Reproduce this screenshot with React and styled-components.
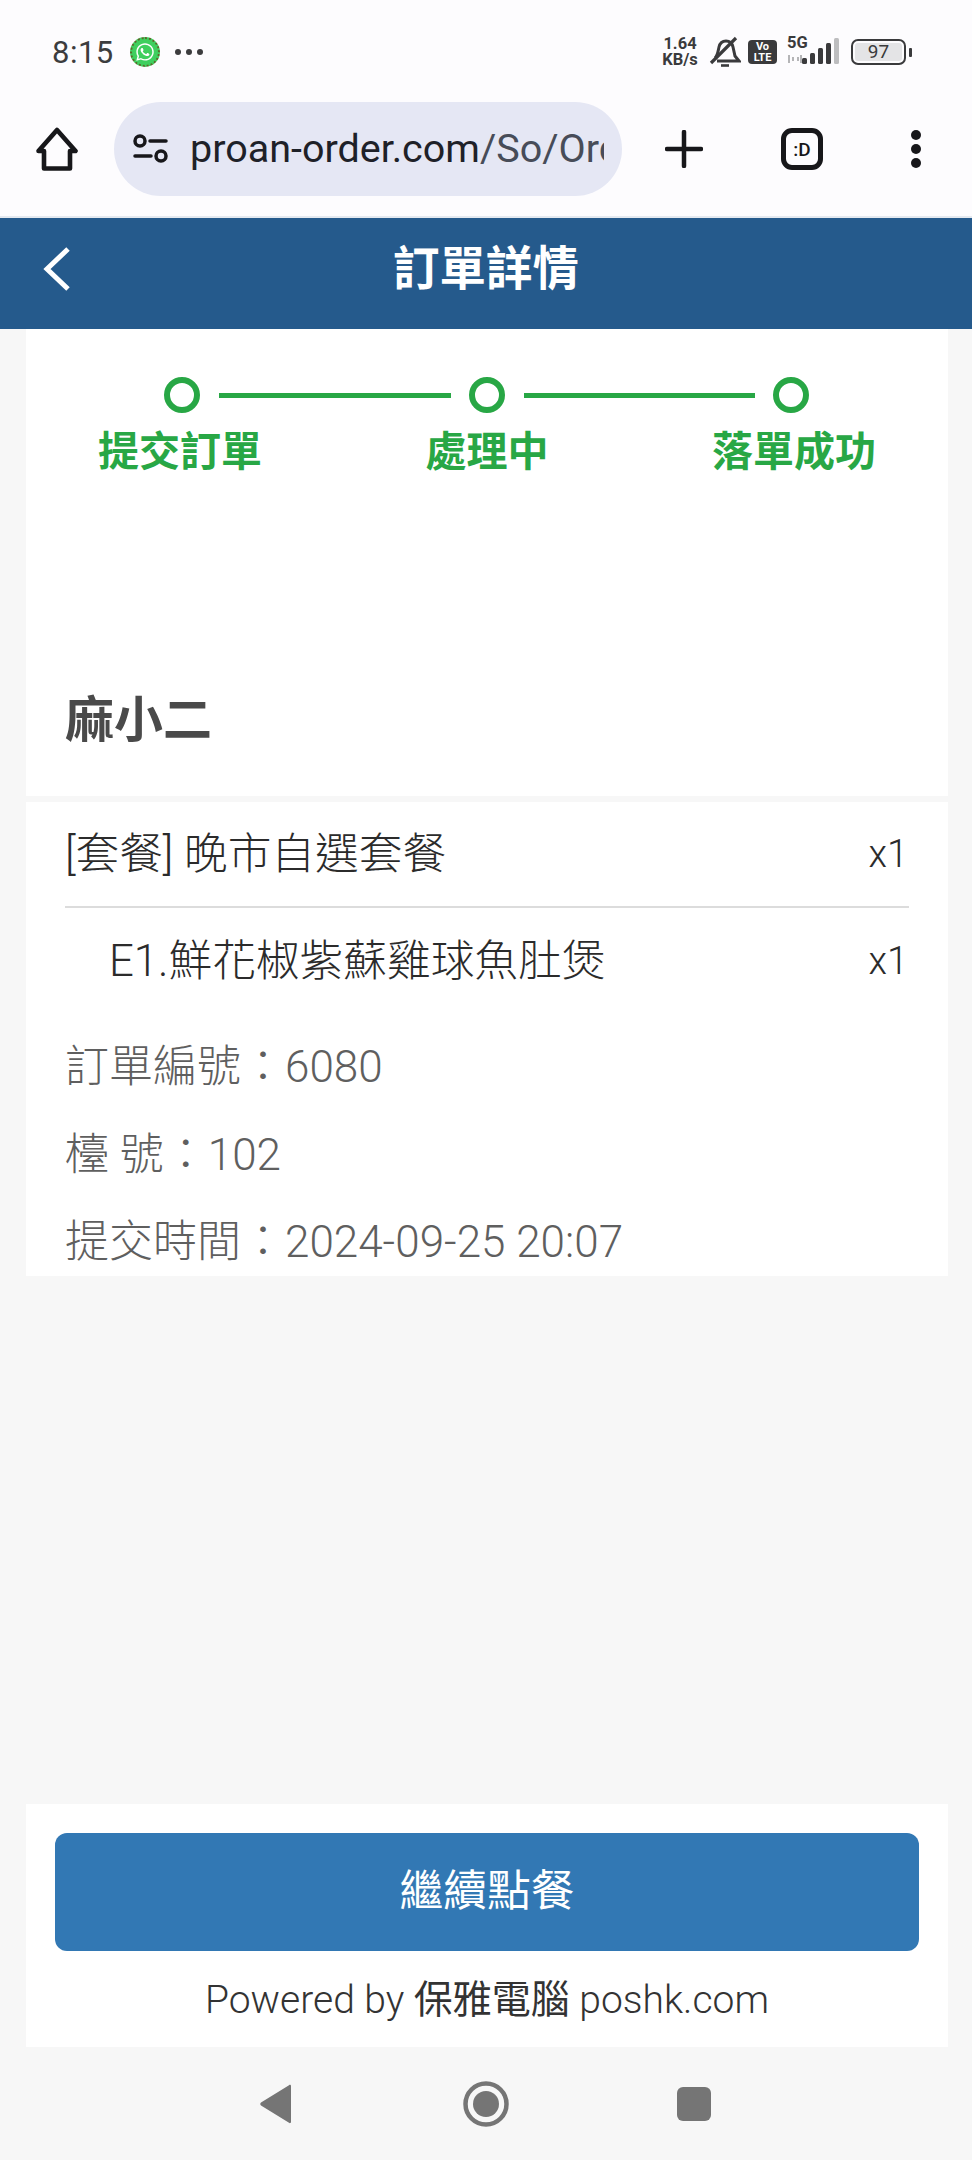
import React from 'react'
import styled, { createGlobalStyle } from 'styled-components'
import { FaWhatsapp } from 'react-icons/fa'

const GlobalStyle = createGlobalStyle`
  html, body {
    margin: 0;
    padding: 0;
    background: #f7f7f7;
  }
  * {
    box-sizing: border-box;
  }
`

const Screen = styled.div`
  width: 972px;
  height: 2160px;
  display: flex;
  flex-direction: column;
  overflow: hidden;
  background: #f7f7f7;
  font-family: Roboto, 'Noto Sans CJK TC', sans-serif;
`

const BrowserChrome = styled.div`
  height: 218px;
  flex: none;
  background: #fdfcfe;
  border-bottom: 2px solid #e4e9f0;
`

const StatusBar = styled.div`
  height: 102px;
  padding: 2px 0 0 52px;
  display: flex;
  align-items: center;
  color: #3c3c3e;
`

const Time = styled.span`
  font-size: 31px;
  width: 78px;
  letter-spacing: 0.5px;
`

const WhatsAppBadge = styled.span`
  width: 30px;
  height: 30px;
  border-radius: 50%;
  background: #3fcf5e;
  border: 2px dotted #5a6a2a;
  color: #fff;
  display: flex;
  align-items: center;
  justify-content: center;
  font-size: 20px;
`

const MoreDots = styled.span`
  display: flex;
  gap: 5px;
  margin-left: 15px;
`

const MoreDot = styled.span`
  width: 6px;
  height: 6px;
  border-radius: 50%;
  background: #3c3c3e;
`

const StatusRight = styled.div`
  margin-left: auto;
  margin-right: 60px;
  display: flex;
  align-items: center;
`

const NetSpeed = styled.span`
  display: flex;
  flex-direction: column;
  align-items: center;
  width: 38px;
  font-size: 16.5px;
  line-height: 16px;
  font-weight: 700;
  color: #3a3a3c;
`

const VoLte = styled.span`
  width: 29px;
  height: 24px;
  margin-left: 7px;
  border-radius: 4px;
  background: #3a3a3c;
  color: #fff;
  display: flex;
  flex-direction: column;
  align-items: center;
  justify-content: center;
  font-size: 11px;
  line-height: 11px;
  font-weight: 700;
`

const SignalWrap = styled.span`
  position: relative;
  width: 56px;
  height: 28px;
  margin-left: 9px;
`

const FiveG = styled.span`
  position: absolute;
  left: 1px;
  top: -5px;
  font-size: 16.5px;
  font-weight: 700;
  color: #3a3a3c;
`

const Battery = styled.span`
  width: 55px;
  height: 26px;
  margin-left: 9px;
  padding: 2px;
  border: 2px solid #3a3a3c;
  border-radius: 7px;
  display: flex;
`

const BatteryFill = styled.span`
  flex: 1;
  border-radius: 3px;
  background: #e4e4e6;
  color: #3a3a3c;
  font-size: 19px;
  line-height: 18px;
  text-align: center;
`

const BatteryCap = styled.span`
  width: 3px;
  height: 9px;
  margin-left: 3px;
  border-radius: 1px;
  background: #3a3a3c;
`

const Toolbar = styled.div`
  height: 94px;
  display: flex;
  align-items: center;
  padding-left: 36px;
`

const ToolIcon = styled.svg`
  flex: none;
  display: block;
  color: #17171a;
`

const AddressPill = styled.div`
  width: 508px;
  height: 94px;
  margin-left: 36px;
  padding: 0 18px 0 19px;
  border-radius: 47px;
  background: #e5e7f4;
  display: flex;
  align-items: center;
  gap: 22px;
`

const UrlText = styled.div`
  flex: 1;
  overflow: hidden;
  white-space: nowrap;
  font-size: 39.5px;
  line-height: 94px;
  color: #1e2128;
`

const UrlPath = styled.span`
  color: #474c58;
`

const PlusSlot = styled.div`
  margin-left: 43px;
`

const TabCounter = styled.div`
  width: 42px;
  height: 42px;
  margin-left: 78px;
  border: 5px solid #17171a;
  border-radius: 11px;
  display: flex;
  align-items: center;
  justify-content: center;
  font-size: 19px;
  font-weight: 500;
  color: #17171a;
`

const MenuDots = styled.div`
  margin-left: 88px;
  display: flex;
  flex-direction: column;
  gap: 4px;
`

const MenuDot = styled.span`
  width: 10px;
  height: 10px;
  border-radius: 50%;
  background: #17171a;
`

const PageHeader = styled.header`
  position: relative;
  height: 111px;
  flex: none;
  padding-bottom: 19px;
  background: #255a8c;
  display: flex;
  align-items: center;
  justify-content: center;
`

const BackButton = styled.svg`
  position: absolute;
  left: 42px;
  top: 28px;
`

const PageTitle = styled.h1`
  margin: 0;
  font-size: 46.5px;
  font-weight: 700;
  color: #fff;
`

const Content = styled.main`
  flex: 1;
  padding: 0 24px 0 26px;
  display: flex;
  flex-direction: column;
`

const Card = styled.section`
  background: #fff;
`

const ProgressCard = styled(Card)`
  height: 467px;
  padding-top: 48px;
`

const Steps = styled.div`
  display: grid;
  grid-template-columns: 36px 232px 36px 231px 36px;
  column-gap: 18.5px;
  align-items: center;
  padding-left: 138px;
  height: 36px;
`

const StepDot = styled.span`
  width: 36px;
  height: 36px;
  border-radius: 50%;
  border: 6px solid #28a745;
`

const StepLine = styled.span`
  height: 5px;
  background: #28a745;
`

const StepLabels = styled.div`
  display: grid;
  grid-template-columns: repeat(3, 180px);
  column-gap: 127px;
  margin: 14px 0 0 64px;
`

const StepLabel = styled.span`
  font-size: 41px;
  line-height: 50px;
  font-weight: 700;
  color: #28a745;
  text-align: center;
  white-space: nowrap;
`

const ShopName = styled.h2`
  margin: 0;
  padding: 213px 0 0 39px;
  font-size: 49px;
  line-height: 62px;
  font-weight: 700;
  color: #4a4a4a;
`

const OrderCard = styled(Card)`
  height: 474px;
  margin-top: 6px;
  padding: 0 39px;
  overflow: hidden;
`

const ItemRow = styled.div`
  height: ${(props) => props.$height}px;
  display: flex;
  align-items: center;
  justify-content: space-between;
  padding-left: ${(props) => props.$indent || 0}px;
  border-bottom: ${(props) => (props.$divided ? '2px solid #dcdcdc' : 'none')};
  font-size: 43.7px;
  font-weight: 300;
  color: #2b2b2b;
`

const ItemName = styled.span`
  margin-top: -9px;
`

const Qty = styled.span`
  font-size: 38px;
  margin-right: 1px;
`

const InfoList = styled.div`
  padding-top: 10px;
`

const InfoRow = styled.div`
  height: 87.5px;
  font-size: 44px;
  line-height: 87.5px;
  font-weight: 300;
  color: #5f5f5f;
  white-space: nowrap;
`

const FooterCard = styled(Card)`
  margin-top: auto;
  height: 243px;
  padding: 29px 29px 0 29px;
`

const ContinueButton = styled.button`
  width: 100%;
  height: 118px;
  padding: 0 0 10px;
  border: none;
  border-radius: 12px;
  background: #3278b4;
  color: #fff;
  font-family: inherit;
  font-size: 43.7px;
  font-weight: 400;
`

const PoweredBy = styled.div`
  margin-top: 26px;
  font-size: 39px;
  line-height: 46px;
  font-weight: 300;
  color: #333;
  text-align: center;
  white-space: nowrap;
`

const PoweredName = styled.span`
  font-weight: 400;
`

const NavBar = styled.nav`
  height: 113px;
  flex: none;
  display: flex;
  align-items: center;
  padding-left: 258px;
  color: #757575;
`

const NavBack = styled.svg`
  display: block;
`

const NavHome = styled.svg`
  display: block;
  margin-left: 171px;
`

const NavSquare = styled.span`
  width: 34px;
  height: 34px;
  margin-left: 168px;
  border-radius: 6px;
  background: #757575;
`

const BellIcon = styled.svg`
  display: block;
  margin-left: 10px;
`

const SignalIcon = styled.svg`
  display: block;
`

const MutedBell = () => (
  <BellIcon width='32' height='32' viewBox='0 0 32 32' fill='none' stroke='#3a3a3c' strokeWidth='3'>
    <path d='M6 22c3-3 3-7 4-11 1-4 4-6 7-6s6 2 7 6l2 9 4 5H8' />
    <path d='M12 29.500h8' strokeWidth='2.6' />
    <path d='M2 27L27 2' strokeWidth='3.2' />
  </BellIcon>
)

const SignalBars = () => (
  <SignalIcon width='56' height='28' viewBox='0 0 56 28'>
    <path d='M2 17h2v8H2zM6 19h2v4H6zM11 19h2v4h-2zM14 17h2v8h-2z' fill='#b5b5b7' />
    <rect x='16' y='20' width='5' height='6' rx='1.5' fill='#3a3a3c' />
    <rect x='24' y='15' width='5' height='11' rx='1.5' fill='#3a3a3c' />
    <rect x='32' y='10' width='5' height='16' rx='1.5' fill='#3a3a3c' />
    <rect x='40' y='5' width='5' height='21' rx='1.5' fill='#3a3a3c' />
    <rect x='48' y='0' width='5' height='26' rx='1.5' fill='#bdbdbf' />
  </SignalIcon>
)

const steps = ['提交訂單', '處理中', '落單成功']

const App = () => (
  <Screen>
    <GlobalStyle />
    <BrowserChrome>
      <StatusBar>
        <Time>8:15</Time>
        <WhatsAppBadge>
          <FaWhatsapp />
        </WhatsAppBadge>
        <MoreDots>
          <MoreDot />
          <MoreDot />
          <MoreDot />
        </MoreDots>
        <StatusRight>
          <NetSpeed>
            <span>1.64</span>
            <span>KB/s</span>
          </NetSpeed>
          <MutedBell />
          <VoLte>
            <span>Vo</span>
            <span>LTE</span>
          </VoLte>
          <SignalWrap>
            <FiveG>5G</FiveG>
            <SignalBars />
          </SignalWrap>
          <Battery>
            <BatteryFill>97</BatteryFill>
          </Battery>
          <BatteryCap />
        </StatusRight>
      </StatusBar>
      <Toolbar>
        <ToolIcon width='42' height='44' viewBox='0 0 42 44' fill='none' stroke='currentColor' strokeWidth='4.6' strokeLinejoin='round'>
          <path d='M2.5 24L21 3l18.500 21h-5.500v17.500H8V24z' />
        </ToolIcon>
        <AddressPill>
          <ToolIcon width='35' height='30' viewBox='0 0 35 30' fill='none' stroke='currentColor' strokeWidth='3.500' strokeLinecap='round'>
            <circle cx='7' cy='7' r='5' />
            <path d='M17 7h16M2 22h16' />
            <circle cx='28' cy='22' r='5' />
          </ToolIcon>
          <UrlText>
            proan-order.com<UrlPath>/So/OrderDetail</UrlPath>
          </UrlText>
        </AddressPill>
        <PlusSlot>
          <ToolIcon width='38' height='38' viewBox='0 0 38 38' stroke='currentColor' strokeWidth='4.500' strokeLinecap='round'>
            <path d='M19 2v34M2 19h34' />
          </ToolIcon>
        </PlusSlot>
        <TabCounter>:D</TabCounter>
        <MenuDots>
          <MenuDot />
          <MenuDot />
          <MenuDot />
        </MenuDots>
      </Toolbar>
    </BrowserChrome>
    <PageHeader>
      <BackButton width='30' height='46' viewBox='0 0 30 46' fill='none' stroke='#fff' strokeWidth='5'>
        <path d='M26 3L5 23l21 20' />
      </BackButton>
      <PageTitle>訂單詳情</PageTitle>
    </PageHeader>
    <Content>
      <ProgressCard>
        <Steps>
          <StepDot />
          <StepLine />
          <StepDot />
          <StepLine />
          <StepDot />
        </Steps>
        <StepLabels>
          {steps.map((step) => (
            <StepLabel key={step}>{step}</StepLabel>
          ))}
        </StepLabels>
        <ShopName>麻小二</ShopName>
      </ProgressCard>
      <OrderCard>
        <ItemRow $height={106} $divided>
          <ItemName>[套餐] 晚市自選套餐</ItemName>
          <Qty>x1</Qty>
        </ItemRow>
        <ItemRow $height={106} $indent={44}>
          <ItemName>E1.鮮花椒紫蘇雞球魚肚煲</ItemName>
          <Qty>x1</Qty>
        </ItemRow>
        <InfoList>
          <InfoRow>訂單編號：6080</InfoRow>
          <InfoRow>檯 號：102</InfoRow>
          <InfoRow>提交時間：2024-09-25 20:07</InfoRow>
        </InfoList>
      </OrderCard>
      <FooterCard>
        <ContinueButton>繼續點餐</ContinueButton>
        <PoweredBy>
          Powered by <PoweredName>保雅電腦</PoweredName> poshk.com
        </PoweredBy>
      </FooterCard>
    </Content>
    <NavBar>
      <NavBack width='34' height='40' viewBox='0 0 34 40'>
        <path d='M33 2v36c0 1-1 1.500-2 .8L3 21.500c-1-.8-1-2 0-3L31 1.200c1-.7 2-.2 2 .8z' fill='currentColor' />
      </NavBack>
      <NavHome width='46' height='46' viewBox='0 0 46 46'>
        <circle cx='23' cy='23' r='20.500' fill='none' stroke='currentColor' strokeWidth='4.500' />
        <circle cx='23' cy='23' r='13' fill='currentColor' />
      </NavHome>
      <NavSquare />
    </NavBar>
  </Screen>
)

export default App
